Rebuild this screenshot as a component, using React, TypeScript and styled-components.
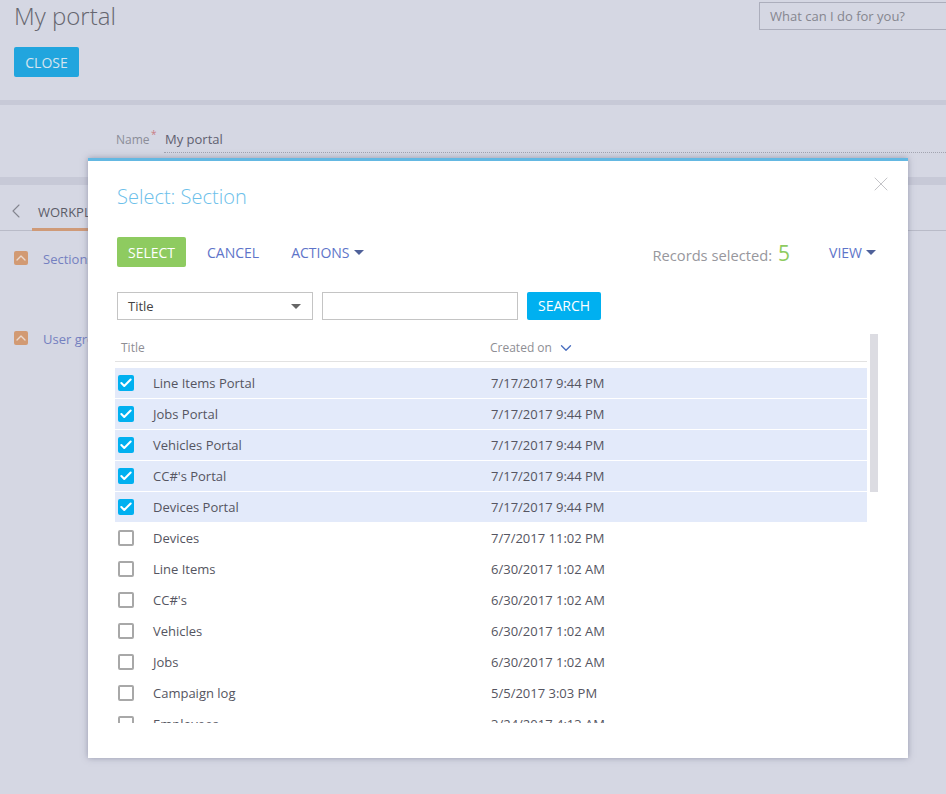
import styled, { createGlobalStyle } from "styled-components";
import { ChevronLeft, ChevronDown, ChevronUp, Check, X } from "lucide-react";

const GlobalStyle = createGlobalStyle`
  html, body {
    margin: 0;
    padding: 0;
    height: 100%;
    overflow: hidden;
    background: #d5d7e3;
    font-family: "Open Sans", "Liberation Sans", sans-serif;
  }
`;

const Page = styled.div`
  position: relative;
  width: 946px;
  height: 794px;
  overflow: hidden;
  background: #d5d7e3;
`;

const Header = styled.div`
  display: flex;
  justify-content: space-between;
  align-items: flex-start;
  height: 100px;
  padding-left: 14px;
  box-sizing: border-box;
`;

const HeaderLeft = styled.div`
  display: flex;
  flex-direction: column;
  align-items: flex-start;
`;

const PageTitle = styled.div`
  font-size: 24px;
  font-weight: 300;
  line-height: 32px;
  color: #66666f;
  margin-bottom: 15px;
`;

const CloseButton = styled.div`
  width: 65px;
  height: 30px;
  line-height: 32px;
  text-align: center;
  font-size: 14px;
  color: #d5e4ef;
  background: #21a5de;
  border-radius: 2px;
`;

const Ask = styled.div`
  width: 187px;
  height: 28px;
  margin-top: 2px;
  box-sizing: border-box;
  border: 1px solid #acaebc;
  border-right: none;
  padding-left: 10px;
  line-height: 26px;
  font-size: 13px;
  color: #85868f;
`;

const Band = styled.div<{ $h: number }>`
  height: ${(p) => p.$h}px;
  background: #c7c9d7;
`;

const NameSection = styled.div`
  height: 72px;
  padding: 21px 0 0 116px;
  box-sizing: border-box;
  display: flex;
  align-items: flex-start;
`;

const NameLabel = styled.div`
  position: relative;
  width: 48px;
  font-size: 12px;
  line-height: 28px;
  color: #8b8d98;
`;

const Star = styled.span`
  position: absolute;
  left: 35px;
  top: -6px;
  color: #c97d85;
  font-size: 10px;
`;

const NameValue = styled.div`
  flex: 1;
  height: 26px;
  padding-left: 1px;
  font-size: 13px;
  line-height: 26px;
  color: #5f6070;
  border-bottom: 1px dotted #a2a4b0;
`;

const Tabs = styled.div`
  height: 46px;
  display: flex;
  align-items: flex-end;
  border-bottom: 1px solid #b9bbc8;
  box-sizing: border-box;
  padding-left: 10px;
`;

const TabBack = styled.div`
  width: 22px;
  height: 24px;
  margin-bottom: 7px;
  color: #84858f;
  svg {
    display: block;
    margin-left: -6px;
  }
`;

const Tab = styled.div`
  width: 90px;
  height: 32px;
  margin-bottom: -1px;
  padding-left: 6px;
  font-size: 13px;
  line-height: 26px;
  white-space: nowrap;
  color: #5b5c68;
  border-bottom: 3px solid #cf9a78;
  box-sizing: border-box;
`;

const Group = styled.div<{ $mt: number }>`
  display: flex;
  align-items: center;
  gap: 15px;
  margin-top: ${(p) => p.$mt}px;
  padding-left: 14px;
  height: 18px;
`;

const GroupToggle = styled.div`
  width: 14px;
  height: 14px;
  margin-bottom: 2px;
  border-radius: 2px;
  background: #d29a73;
  color: #ead9cf;
  display: flex;
  align-items: center;
  justify-content: center;
  svg {
    flex: none;
  }
`;

const GroupName = styled.div`
  font-size: 13px;
  color: #7480c0;
`;

const Modal = styled.div`
  position: absolute;
  left: 88px;
  top: 158px;
  width: 820px;
  height: 600px;
  box-sizing: border-box;
  background: #fff;
  border-top: 3px solid #64b8e2;
  box-shadow: 0 0 6px rgba(90, 92, 120, 0.5);
  padding: 0 29px 0 27px;
`;

const ModalClose = styled.div`
  position: absolute;
  top: 11px;
  right: 15px;
  color: #c4c4c8;
  svg {
    display: block;
  }
`;

const ModalTitle = styled.div`
  padding: 21px 0 0 2px;
  height: 55px;
  box-sizing: border-box;
  font-size: 20px;
  font-weight: 300;
  line-height: 30px;
  color: #6cc0ea;
`;

const Toolbar = styled.div`
  height: 30px;
  margin: 21px 0 0 2px;
  display: flex;
  align-items: center;
`;

const SelectButton = styled.div`
  width: 69px;
  height: 30px;
  line-height: 32px;
  text-align: center;
  font-size: 14px;
  color: #fff;
  background: #8ecb60;
  border-radius: 2px;
  margin-right: 21px;
`;

const LinkButton = styled.div<{ $mr?: number }>`
  display: flex;
  align-items: center;
  gap: 4px;
  font-size: 14px;
  color: #5e74c9;
  margin-right: ${(p) => p.$mr ?? 0}px;
`;

const Caret = styled.span<{ $color: string }>`
  width: 0;
  height: 0;
  border-left: 5px solid transparent;
  border-right: 5px solid transparent;
  border-top: 5px solid ${(p) => p.$color};
`;

const Spacer = styled.div`
  flex: 1;
`;

const Records = styled.div`
  display: flex;
  align-items: baseline;
  gap: 6px;
  margin: 1px 39px 0 0;
  font-size: 14.7px;
  color: #97979d;
`;

const RecordCount = styled.span`
  font-size: 21px;
  color: #8ecb60;
`;

const FilterRow = styled.div`
  display: flex;
  gap: 9px;
  margin: 25px 0 0 2px;
`;

const FilterSelect = styled.div`
  width: 196px;
  height: 28px;
  box-sizing: border-box;
  border: 1px solid #c4c4c4;
  padding: 0 11px 0 10px;
  display: flex;
  align-items: center;
  justify-content: space-between;
  font-size: 13px;
  color: #444;
`;

const FilterInput = styled.div`
  width: 196px;
  height: 28px;
  box-sizing: border-box;
  border: 1px solid #c4c4c4;
`;

const SearchButton = styled.div`
  width: 74px;
  height: 28px;
  line-height: 28px;
  text-align: center;
  font-size: 14px;
  color: #fff;
  background: #00b0f0;
  border-radius: 2px;
`;

const Grid = styled.div`
  position: relative;
  height: 389px;
  margin-top: 14px;
  overflow: hidden;
`;

const Scrollbar = styled.div`
  position: absolute;
  left: 755px;
  top: 0;
  width: 8px;
  height: 158px;
  background: #dcdce2;
`;

const GridHead = styled.div`
  width: 752px;
  height: 28px;
  margin-bottom: 6px;
  box-sizing: border-box;
  border-bottom: 1px solid #e2e2e2;
  display: grid;
  grid-template-columns: 369px 1fr;
  align-items: center;
  padding: 0 0 1px 6px;
  font-size: 12px;
  color: #8e8e94;
`;

const SortHead = styled.div`
  display: flex;
  align-items: center;
  gap: 5px;
  svg {
    color: #4a6fc0;
    margin-top: 1px;
  }
`;

const Row = styled.div<{ $selected: boolean }>`
  width: 752px;
  height: 30px;
  margin-bottom: 1px;
  display: grid;
  grid-template-columns: 35px 338px 1fr;
  align-items: center;
  padding-left: 3px;
  box-sizing: border-box;
  font-size: 13px;
  color: #555561;
  background: ${(p) => (p.$selected ? "#e3eafa" : "#fff")};
`;

const CheckBox = styled.div<{ $checked: boolean }>`
  width: 16px;
  height: 16px;
  box-sizing: border-box;
  border-radius: 2px;
  display: flex;
  align-items: center;
  justify-content: center;
  color: #fff;
  background: ${(p) => (p.$checked ? "#00b0f0" : "#fff")};
  border: ${(p) => (p.$checked ? "none" : "2px solid #a8a8a8")};
`;

const rows = [
  ["Line Items Portal", "7/17/2017 9:44 PM", true],
  ["Jobs Portal", "7/17/2017 9:44 PM", true],
  ["Vehicles Portal", "7/17/2017 9:44 PM", true],
  ["CC#'s Portal", "7/17/2017 9:44 PM", true],
  ["Devices Portal", "7/17/2017 9:44 PM", true],
  ["Devices", "7/7/2017 11:02 PM", false],
  ["Line Items", "6/30/2017 1:02 AM", false],
  ["CC#'s", "6/30/2017 1:02 AM", false],
  ["Vehicles", "6/30/2017 1:02 AM", false],
  ["Jobs", "6/30/2017 1:02 AM", false],
  ["Campaign log", "5/5/2017 3:03 PM", false],
  ["Employees", "3/24/2017 4:13 AM", false],
] as [string, string, boolean][];

export default function App() {
  return (
    <Page>
      <GlobalStyle />
      <Header>
        <HeaderLeft>
          <PageTitle>My portal</PageTitle>
          <CloseButton>CLOSE</CloseButton>
        </HeaderLeft>
        <Ask>What can I do for you?</Ask>
      </Header>
      <Band $h={5} />
      <NameSection>
        <NameLabel>
          Name<Star>*</Star>
        </NameLabel>
        <NameValue>My portal</NameValue>
      </NameSection>
      <Band $h={8} />
      <Tabs>
        <TabBack>
          <ChevronLeft size={24} strokeWidth={1.1} />
        </TabBack>
        <Tab>WORKPLACES</Tab>
      </Tabs>
      <Group $mt={19}>
        <GroupToggle>
          <ChevronUp size={16} strokeWidth={2} />
        </GroupToggle>
        <GroupName>Sections</GroupName>
      </Group>
      <Group $mt={62}>
        <GroupToggle>
          <ChevronUp size={16} strokeWidth={2} />
        </GroupToggle>
        <GroupName>User groups</GroupName>
      </Group>

      <Modal>
        <ModalClose>
          <X size={24} strokeWidth={1} />
        </ModalClose>
        <ModalTitle>Select: Section</ModalTitle>
        <Toolbar>
          <SelectButton>SELECT</SelectButton>
          <LinkButton $mr={32}>CANCEL</LinkButton>
          <LinkButton>
            ACTIONS <Caret $color="#4f6199" />
          </LinkButton>
          <Spacer />
          <Records>
            Records selected: <RecordCount>5</RecordCount>
          </Records>
          <LinkButton $mr={3}>
            VIEW <Caret $color="#4f6199" />
          </LinkButton>
        </Toolbar>
        <FilterRow>
          <FilterSelect>
            Title <Caret $color="#666" />
          </FilterSelect>
          <FilterInput />
          <SearchButton>SEARCH</SearchButton>
        </FilterRow>
        <Grid>
          <Scrollbar />
          <GridHead>
            <div>Title</div>
            <SortHead>
              Created on <ChevronDown size={18} strokeWidth={1.8} />
            </SortHead>
          </GridHead>
          {rows.map(([title, created, checked]) => (
            <Row key={title} $selected={checked}>
              <CheckBox $checked={checked}>
                {checked && <Check size={14} strokeWidth={3.5} />}
              </CheckBox>
              <div>{title}</div>
              <div>{created}</div>
            </Row>
          ))}
        </Grid>
      </Modal>
    </Page>
  );
}
